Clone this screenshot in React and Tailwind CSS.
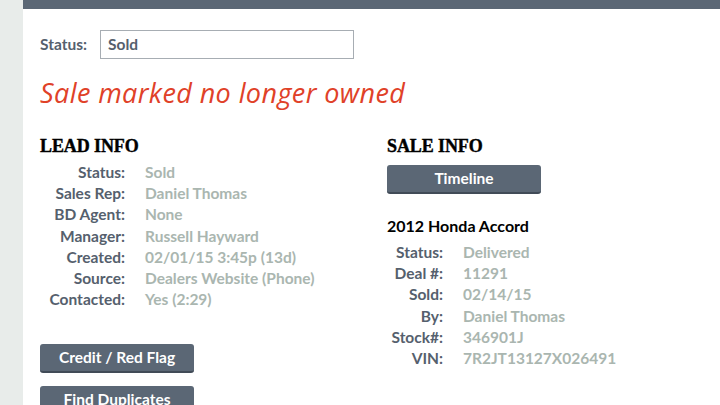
import React from "react";

const lead = [
  ["Status:", "Sold"],
  ["Sales Rep:", "Daniel Thomas"],
  ["BD Agent:", "None"],
  ["Manager:", "Russell Hayward"],
  ["Created:", "02/01/15 3:45p (13d)"],
  ["Source:", "Dealers Website (Phone)"],
  ["Contacted:", "Yes (2:29)"],
];

const sale = [
  ["Status:", "Delivered"],
  ["Deal #:", "11291"],
  ["Sold:", "02/14/15"],
  ["By:", "Daniel Thomas"],
  ["Stock#:", "346901J"],
  ["VIN:", "7R2JT13127X026491"],
];

function InfoRows({ rows, labelWidth }) {
  return (
    <div className="flex flex-col">
      {rows.map(([k, v]) => (
        <div key={k} className="flex h-[21.2px] items-center text-[15.5px]">
          <div className={`${labelWidth} shrink-0 text-right font-bold text-[#55606d]`}>{k}</div>
          <div className="ml-[20px] font-bold text-[#aab6b0] whitespace-nowrap">{v}</div>
        </div>
      ))}
    </div>
  );
}

function Btn({ children }) {
  return (
    <button className="w-[154px] h-[29px] shrink-0 rounded-[3px] bg-[#5b6775] border-b-2 border-[#414b57] text-white text-[15.5px] font-bold">
      {children}
    </button>
  );
}

function Heading({ children }) {
  return (
    <h2 className="text-[18px] leading-[22px] font-bold text-black tracking-[-0.1px] font-['Liberation_Serif',serif] [-webkit-text-stroke:0.4px_black]">
      {children}
    </h2>
  );
}

export default function App() {
  return (
    <div className="flex w-[720px] h-[405px] overflow-hidden bg-white font-['Lato',sans-serif]">
      {/* side strip */}
      <div className="w-[23px] shrink-0 bg-[#e8ecea]" />
      <main className="flex-1 flex flex-col">
        <div className="h-[9px] shrink-0 bg-[#5b6775]" />
        <div className="pl-[17px] pt-[21px]">
          {/* status field */}
          <div className="flex items-center">
            <span className="text-[15.5px] font-bold text-[#55606d]">Status:</span>
            <div className="ml-[13px] w-[254px] h-[29px] border border-[#a7adb3] flex items-center px-[7px] text-[15.5px] font-bold text-[#55606d]">
              Sold
            </div>
          </div>
          <h1 className="mt-[18px] text-[27px] leading-[32px] italic text-[#e04128] font-['Open_Sans',sans-serif] tracking-[0.4px]">
            Sale marked no longer owned
          </h1>

          <div className="mt-[26px] flex">
            {/* lead info */}
            <div className="w-[347px]">
              <Heading>LEAD INFO</Heading>
              <div className="mt-[5px]">
                <InfoRows rows={lead} labelWidth="w-[85px]" />
              </div>
              <div className="mt-[34px] flex flex-col gap-[13px]">
                <Btn>Credit / Red Flag</Btn>
                <Btn>Find Duplicates</Btn>
              </div>
            </div>
            {/* sale info */}
            <div>
              <Heading>SALE INFO</Heading>
              <div className="mt-[8px]">
                <Btn>Timeline</Btn>
              </div>
              <div className="mt-[20px] text-[16px] font-bold text-black">2012 Honda Accord</div>
              <div className="mt-[4px]">
                <InfoRows rows={sale} labelWidth="w-[56px]" />
              </div>
            </div>
          </div>
        </div>
      </main>
    </div>
  );
}
